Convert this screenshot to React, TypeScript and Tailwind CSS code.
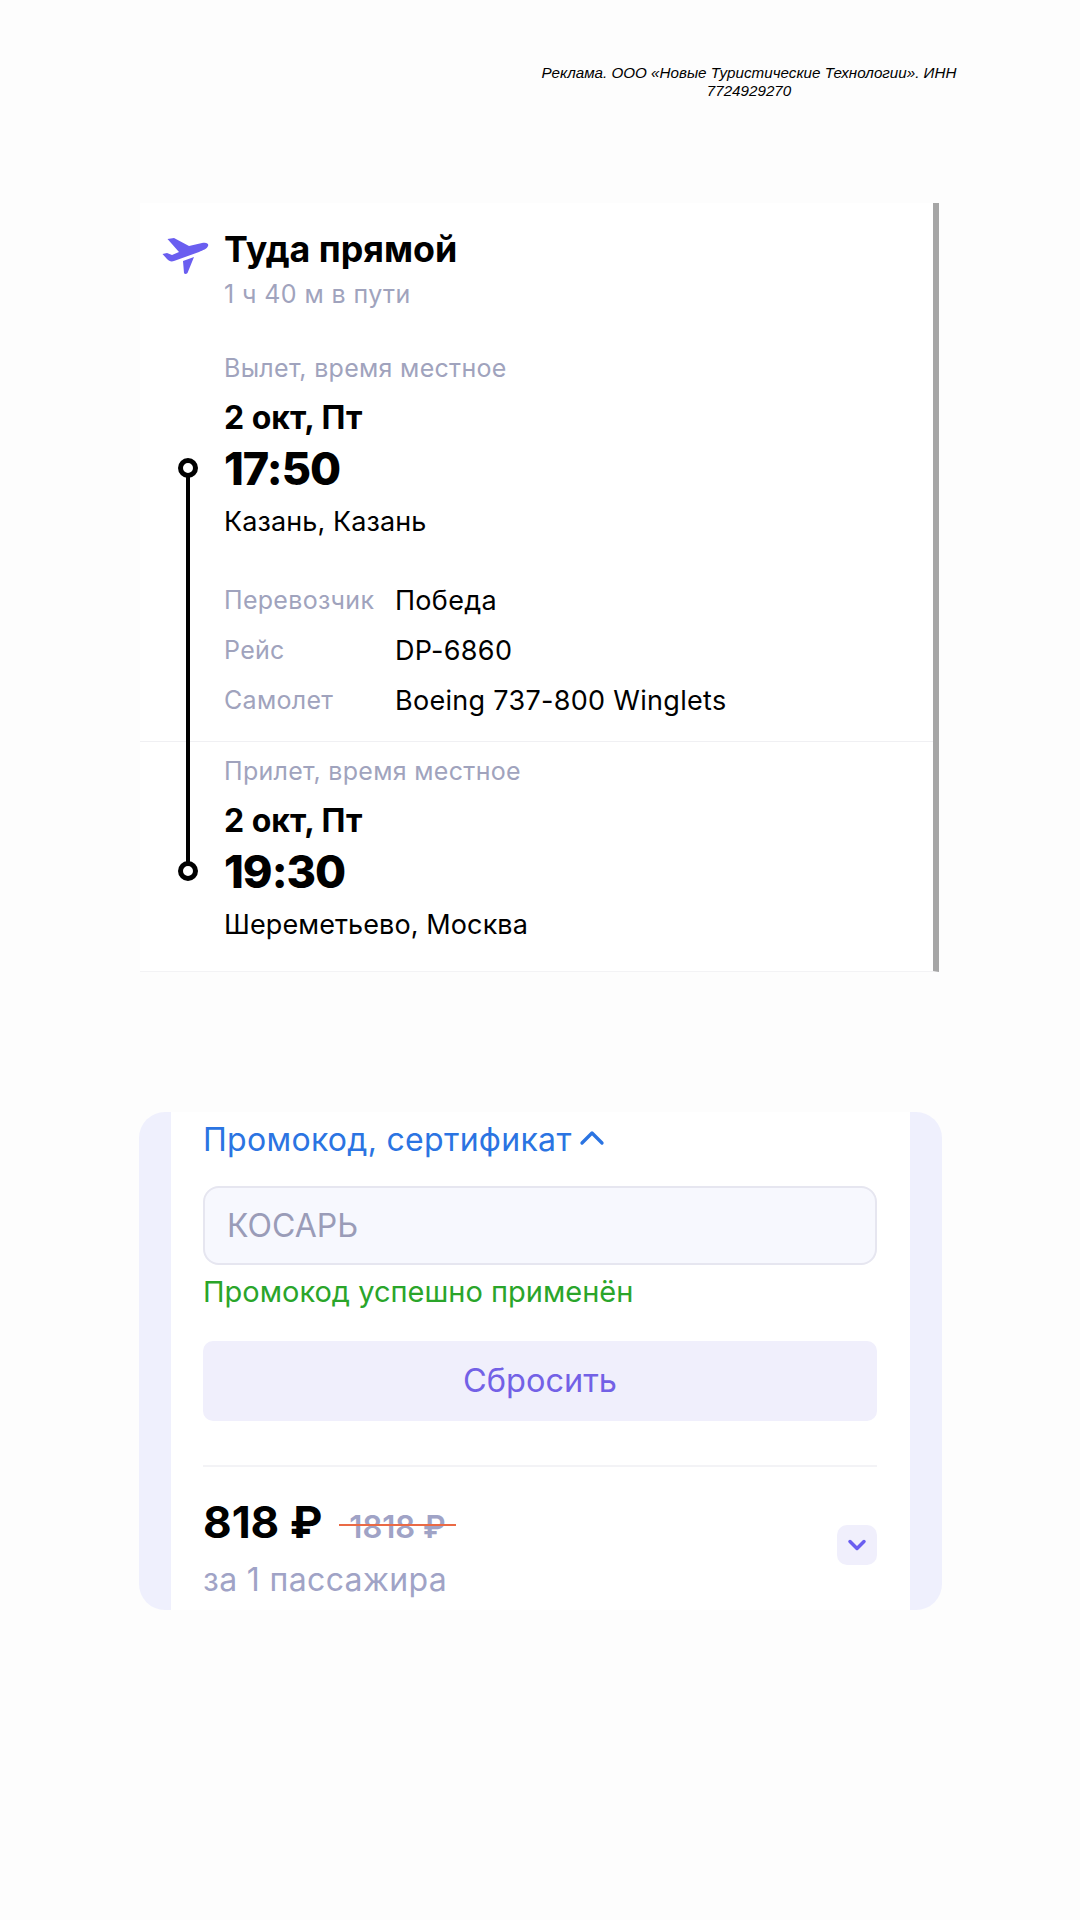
import { ChevronDown, ChevronUp } from "lucide-react";

const LABEL = "text-[#a0a3bd]";

const PlaneIcon = () => (
  <svg width="48" height="40" viewBox="6 11 48 40" className="shrink-0">
    <path
      d="M12.500 14 19 13 34 21 47 18C52 17 54 19 53 21 52 24 48 25 44 27L19 36C16 37 14 36 12 34L7.500 29 12 28 17 30 24 27ZM28 36 39 32 32.500 48C31 49.500 29.500 49 29 48Z"
      fill="#6a5ef0"
    />
  </svg>
);

const Stop = ({ label, time, place }: { label: string; time: string; place: string }) => (
  <div className="flex flex-col pl-[84px]">
    <span className={`text-[25px] leading-[30px] tracking-[0.3px] ${LABEL}`}>{label}</span>
    <span className="mt-[16px] text-[32px] leading-[38px] font-bold text-black">2 окт, Пт</span>
    <span className="mt-[4px] text-[45px] leading-[56px] font-extrabold tracking-[-1px] text-black">{time}</span>
    <span className="mt-[7px] text-[27px] leading-[36px] tracking-[0.1px] text-black">{place}</span>
  </div>
);

const Dot = ({ className }: { className: string }) => (
  <div className={`absolute left-[38px] size-[20px] rounded-full border-[5px] border-black bg-white ${className}`} />
);

const App = () => {
  const details = [
    ["Перевозчик", "Победа"],
    ["Рейс", "DP-6860"],
    ["Самолет", "Boeing 737-800 Winglets"],
  ];

  return (
    <div className="flex h-[1920px] w-[1080px] flex-col overflow-hidden bg-[#fdfdfd] font-['Inter',sans-serif]">
      {/* Ad label */}
      <p className="mt-[64px] ml-[539px] w-[420px] text-center font-['Liberation_Sans',sans-serif] text-[15.200px] leading-[18px] text-black italic">
        Реклама. ООО «Новые Туристические Технологии». ИНН 7724929270
      </p>

      {/* Flight card */}
      <div className="relative mt-[103px] ml-[140px] flex h-[769px] w-[799px] flex-col border-r-[6px] border-b border-r-[#a6a6a6] border-b-[#f3f3f5] bg-white">
        <div className="absolute top-[265px] bottom-[102px] left-[46px] w-[4px] bg-black" />
        <Dot className="top-[255px]" />
        <Dot className="top-[658px]" />

        <div className="flex gap-[15px] pt-[24px] pl-[21px]">
          <div className="pt-[9px]"><PlaneIcon /></div>
          <div className="flex flex-col">
            <span className="text-[35.800px] leading-[44px] font-bold text-black">Туда прямой</span>
            <span className={`mt-[6px] text-[25px] leading-[34px] tracking-[0.4px] ${LABEL}`}>1 ч 40 м в пути</span>
          </div>
        </div>

        <div className="mt-[42px]">
          <Stop label="Вылет, время местное" time="17:50" place="Казань, Казань" />
        </div>

        <div className="mt-[43px] flex flex-col gap-[14px] pl-[84px]">
          {details.map(([name, value]) => (
            <div key={name} className="flex h-[36px] items-center">
              <span className={`w-[171px] text-[25px] tracking-[0.3px] ${LABEL}`}>{name}</span>
              <span className="text-[27px] tracking-[0.3px] text-black">{value}</span>
            </div>
          ))}
        </div>

        <div className="mt-[22px] h-[1px] w-full bg-[#f0f0f3]" />
        <div className="mt-[14px]">
          <Stop label="Прилет, время местное" time="19:30" place="Шереметьево, Москва" />
        </div>
      </div>

      {/* Promo card */}
      <div className="mt-[140px] ml-[139px] h-[498px] w-[803px] rounded-[26px] bg-[#eff0fd] px-[32px]">
        <div className="flex h-full flex-col bg-white pr-[33px] pl-[32px]">
          <div className="mt-[5px] flex h-[46px] items-center text-[#2b74e2]">
            <span className="text-[32px] tracking-[0.3px]">Промокод, сертификат</span>
            <ChevronUp size={40} strokeWidth={2} className="-mt-[4px]" />
          </div>
          <div className="mt-[23px] flex h-[79px] items-center rounded-[16px] border-2 border-[#e6e6f0] bg-[#f7f8fe] px-[22px] text-[32px] text-[#9a9cb8]">
            КОСАРЬ
          </div>
          <span className="mt-[8px] text-[29px] leading-[38px] text-[#2aa52a]">Промокод успешно применён</span>
          <div className="mt-[30px] flex h-[80px] items-center justify-center rounded-[10px] bg-[#f0effc] text-[32.500px] text-[#7361e6]">
            Сбросить
          </div>
          <div className="mt-[44px] h-[2px] bg-[#f3f3f6]" />
          <div className="mt-[30px] flex items-center justify-between">
            <div className="flex flex-col">
              <div className="flex items-center gap-[17px]">
                <span className="-mt-[3px] text-[44px] leading-[56px] font-bold text-black">818 ₽</span>
                <span className="relative mt-[7px] text-[31px] leading-[40px] font-semibold text-[#a0a3c6]">
                  <span className="px-[10px]">1818 ₽</span>
                  <span className="absolute top-[17px] right-0 left-0 h-[2px] bg-[#ea6a45]" />
                </span>
              </div>
              <span className="mt-[10px] text-[32px] leading-[40px] tracking-[0.35px] text-[#a0a3c6]">за 1 пассажира</span>
            </div>
            <div className="mb-[8px] flex size-[40px] items-center justify-center rounded-[10px] bg-[#f0effc] text-[#6a5ef0]">
              <ChevronDown size={28} strokeWidth={3} />
            </div>
          </div>
        </div>
      </div>
    </div>
  );
};

export default App;
